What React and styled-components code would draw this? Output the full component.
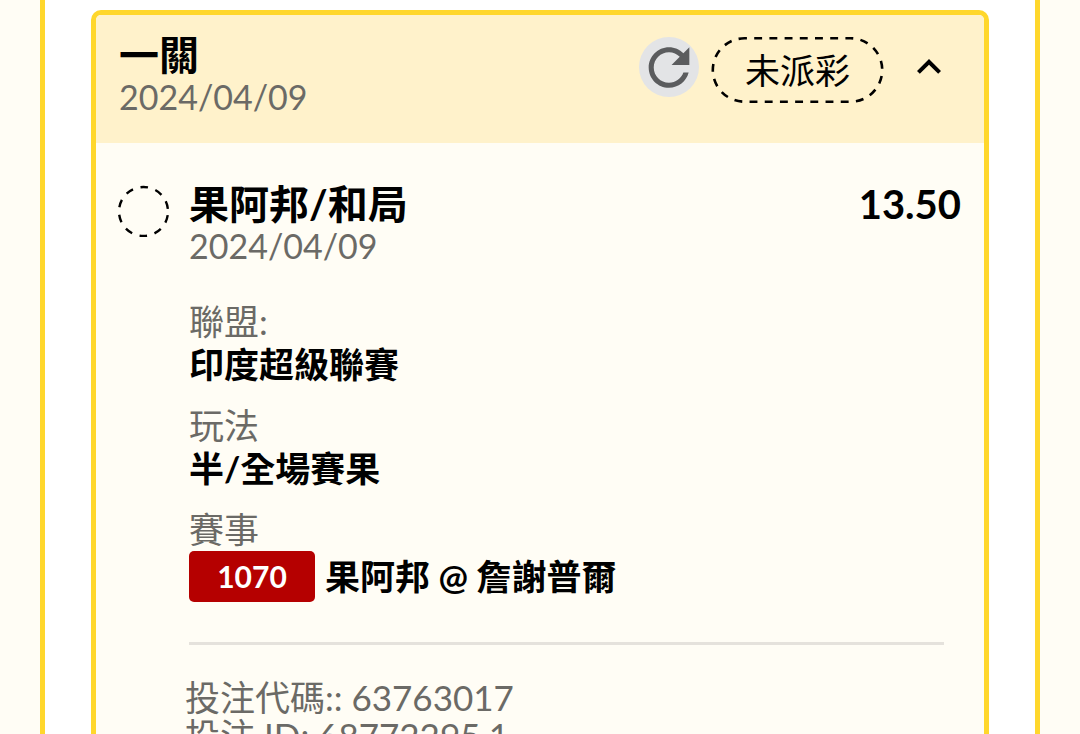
import React from 'react';
import styled, { createGlobalStyle } from 'styled-components';

const GlobalStyle = createGlobalStyle`
  * {
    box-sizing: border-box;
  }

  body {
    margin: 0;
    background: #fffdf5;
    color: #000;
    font-family: Lato, "Noto Sans CJK TC", sans-serif;
  }
`;

const Page = styled.div`
  height: 100vh;
  padding: 0 40px;
  overflow: hidden;
`;

const Panel = styled.main`
  min-height: 100%;
  padding: 10px 46px;
  background: #fff;
  border: solid #ffd72c;
  border-width: 0 5px;
`;

const Card = styled.article`
  overflow: hidden;
  background: #fffdf5;
  border: 5px solid #ffd72c;
  border-radius: 10px;
`;

const CardHeader = styled.header`
  display: flex;
  justify-content: space-between;
  align-items: flex-start;
  padding: 20px 25px 26px 23px;
  background: #fff2cb;
`;

const Title = styled.h2`
  margin: 0;
  font-size: 40px;
  font-weight: 700;
  line-height: 41px;
`;

const DateText = styled.time`
  display: block;
  color: #6b6a66;
  font-size: 34px;
  line-height: 41px;
`;

const Actions = styled.div`
  display: flex;
  align-items: flex-start;
  gap: 12px;
  padding-top: 2px;
`;

const IconButton = styled.button`
  display: flex;
  align-items: center;
  justify-content: center;
  width: 60px;
  height: 60px;
  padding: 0;
  background: ${({ $filled }) => ($filled ? '#e3e4e6' : 'transparent')};
  color: ${({ $filled }) => ($filled ? '#5b5c5e' : '#000')};
  border: 0;
  border-radius: 50%;
  cursor: pointer;
`;

const Status = styled.span`
  position: relative;
  margin-right: 3px;
  padding: 0 34px;
  font-size: 35px;
  line-height: 66px;
`;

const StatusOutline = styled.svg`
  position: absolute;
  inset: 0;
  width: 100%;
  height: 100%;
`;

const CardBody = styled.div`
  display: flex;
  gap: 19px;
  padding: 41px 23px 24px 21px;
`;

const Marker = styled.svg`
  flex: none;
  width: 53px;
  height: 53px;
`;

const Detail = styled.div`
  flex: 1;
`;

const Selection = styled.div`
  display: flex;
  justify-content: space-between;
  margin-bottom: 34px;
`;

const Odds = styled.strong`
  font-size: 40px;
  line-height: 41px;
`;

const Fields = styled.dl`
  display: flex;
  flex-direction: column;
  gap: 18px;
  margin: 0;
`;

const Label = styled.dt`
  color: #6b6a66;
  font-size: 35px;
  line-height: 43px;
`;

const Value = styled.dd`
  display: flex;
  align-items: center;
  gap: 10px;
  margin: 0;
  font-size: 35px;
  font-weight: 700;
  line-height: 43px;
`;

const MatchCode = styled.span`
  min-width: 126px;
  color: #fff;
  background: #b50000;
  border-radius: 5px;
  font-size: 30px;
  line-height: 51px;
  text-align: center;
`;

const Divider = styled.hr`
  margin: 40px 17px 33px 0;
  border: 0;
  border-top: 3px solid #e5e2dc;
`;

const Reference = styled.p`
  margin: 0 0 0 -4px;
  color: #6b6a66;
  font-size: 35px;
  line-height: 38px;
`;

const RefreshIcon = () => (
  <svg width="60" height="60" viewBox="0.2 0 23.6 23.6" fill="currentColor" aria-hidden="true">
    <path d="M17.65 6.35C16.2 4.9 14.21 4 12 4c-4.42 0-7.99 3.58-7.99 8s3.57 8 7.99 8c3.73 0 6.84-2.55 7.73-6h-2.08c-.82 2.33-3.04 4-5.65 4-3.31 0-6-2.69-6-6s2.69-6 6-6c1.66 0 3.14.69 4.22 1.78L13 11h7V4l-2.35 2.35z" />
  </svg>
);

const ChevronUp = () => (
  <svg width="48" height="48" viewBox="0 0 24 24" fill="currentColor" aria-hidden="true">
    <path d="M12 8l-6 6 1.41 1.41L12 10.83l4.59 4.58L18 14z" />
  </svg>
);

const App = () => {
  return (
    <>
      <GlobalStyle />
      <Page>
        <Panel>
          <Card>
            <CardHeader>
              <div>
                <Title>一關</Title>
                <DateText>2024/04/09</DateText>
              </div>
              <Actions>
                <IconButton $filled aria-label="重新整理">
                  <RefreshIcon />
                </IconButton>
                <Status>
                  <StatusOutline viewBox="0 0 172 66" aria-hidden="true">
                    <rect x="1.3" y="1.3" width="169.4" height="63.4" rx="31.7" fill="none" stroke="#000" strokeWidth="2.6" strokeDasharray="7.9 7.3" strokeDashoffset="5.5" />
                  </StatusOutline>
                  未派彩
                </Status>
                <IconButton aria-label="收合">
                  <ChevronUp />
                </IconButton>
              </Actions>
            </CardHeader>
            <CardBody>
              <Marker viewBox="0 0 53 53" aria-hidden="true">
                <circle cx="26.5" cy="27.5" r="24.5" fill="none" stroke="#000" strokeWidth="2.4" strokeDasharray="7.7 7.7" strokeDashoffset="-3.8" />
              </Marker>
              <Detail>
                <Selection>
                  <div>
                    <Title as="h3">果阿邦/和局</Title>
                    <DateText>2024/04/09</DateText>
                  </div>
                  <Odds>13.50</Odds>
                </Selection>
                <Fields>
                  <div>
                    <Label>聯盟:</Label>
                    <Value>印度超級聯賽</Value>
                  </div>
                  <div>
                    <Label>玩法</Label>
                    <Value>半/全場賽果</Value>
                  </div>
                  <div>
                    <Label>賽事</Label>
                    <Value>
                      <MatchCode>1070</MatchCode>
                      果阿邦 @ 詹謝普爾
                    </Value>
                  </div>
                </Fields>
                <Divider />
                <Reference>投注代碼:: 63763017</Reference>
                <Reference>投注 ID: 68772295.1</Reference>
              </Detail>
            </CardBody>
          </Card>
        </Panel>
      </Page>
    </>
  );
};

export default App;
